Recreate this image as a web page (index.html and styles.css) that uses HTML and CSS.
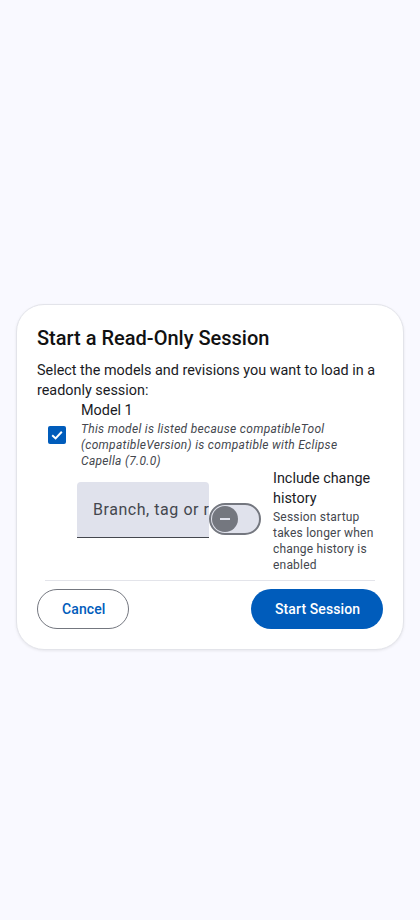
FILE: index.html
```html
<!DOCTYPE html>
<html>
<head>
<meta charset="utf-8">
<link rel="stylesheet" href="styles.css">
</head>
<body>
<div class="page">
  <div class="card">
    <h2 class="title">Start a Read-Only Session</h2>
    <p class="desc">Select the models and revisions you want to load in a readonly session:</p>
    <div class="model">
      <div class="check-wrap">
        <span class="checkbox">
          <svg width="18" height="18" viewBox="0 0 18 18"><path d="M4.2 9.2 L7.6 12.4 L13.8 5.8" fill="none" stroke="#fff" stroke-width="2"/></svg>
        </span>
      </div>
      <div class="model-text">
        <div class="model-name">Model 1</div>
        <div class="model-hint">This model is listed because compatibleTool (compatibleVersion) is compatible with Eclipse Capella (7.0.0)</div>
      </div>
    </div>
    <div class="revision">
      <div class="field-wrap">
        <div class="field"><span class="placeholder">Branch, tag or revision</span></div>
      </div>
      <div class="switch">
        <span class="thumb"><span class="minus"></span></span>
      </div>
      <div class="history">
        <div class="history-label">Include change history</div>
        <div class="history-hint">Session startup takes longer when change history is enabled</div>
      </div>
    </div>
    <div class="divider"></div>
    <div class="actions">
      <button class="btn btn-outline">Cancel</button>
      <button class="btn btn-filled">Start Session</button>
    </div>
  </div>
</div>
</body>
</html>
```
FILE: styles.css
```css
* { box-sizing: border-box; }
html, body { margin: 0; padding: 0; }
body {
  background: #f9f9ff;
  font-family: Roboto, "Liberation Sans", sans-serif;
  color: #1a1b1f;
  width: 420px;
  height: 920px;
}
.page {
  height: 920px;
  display: flex;
  align-items: center;
  padding-left: 16px;
  padding-top: 34px;
}
.card {
  width: 388px;
  background: #fff;
  border: 1px solid #e3e4ea;
  border-radius: 28px;
  box-shadow: 0 1px 3px rgba(0,0,0,0.08);
  padding: 19px 20px 20px 20px;
}
.title {
  margin: 0;
  font-size: 20px;
  line-height: 28px;
  font-weight: 500;
  color: #111;
}
.desc {
  margin: 9px 0 0 0;
  font-size: 14.4px;
  line-height: 20px;
  color: #1a1b1f;
}
.model {
  display: flex;
  align-items: center;
}
.check-wrap {
  width: 40px;
  flex: none;
  display: flex;
  justify-content: center;
}
.checkbox {
  width: 18px;
  height: 18px;
  border-radius: 2px;
  background: #005cbb;
  display: block;
}
.checkbox svg { display: block; }
.model-text { padding-left: 4px; }
.model-name {
  font-size: 14.4px;
  line-height: 20px;
}
.model-hint {
  font-size: 12px;
  line-height: 16px;
  font-style: italic;
  color: #44474e;
  letter-spacing: 0.3px;
  max-width: 290px;
}
.revision {
  display: flex;
  align-items: center;
  padding-left: 40px;
}
.field-wrap {
  width: 132px;
  flex: none;
  padding-bottom: 22px;
}
.field {
  height: 56px;
  background: #e0e2ec;
  border-radius: 4px 4px 0 0;
  border-bottom: 1px solid #44474e;
  overflow: hidden;
  white-space: nowrap;
  padding: 17px 0 0 16px;
  font-size: 16px;
  line-height: 22px;
  color: #44474e;
  letter-spacing: 0.55px;
}
.switch {
  width: 52px;
  height: 32px;
  flex: none;
  border: 2px solid #74777f;
  border-radius: 16px;
  background: #e0e2ec;
  display: flex;
  align-items: center;
  padding-left: 1px;
  margin-bottom: 4px;
}
.thumb {
  width: 26px;
  height: 26px;
  border-radius: 50%;
  background: #74777f;
  display: flex;
  align-items: center;
  justify-content: center;
}
.minus {
  width: 10px;
  height: 2px;
  background: #e0e2ec;
}
.history {
  margin-left: 12px;
  flex: 1;
}
.history-label {
  font-size: 14.4px;
  line-height: 20px;
}
.history-hint {
  font-size: 12px;
  line-height: 16px;
  color: #44474e;
  letter-spacing: 0.2px;
}
.divider {
  height: 1px;
  background: #e3e4ea;
  margin: 7px 8px 8px 8px;
}
.actions {
  display: flex;
  justify-content: space-between;
}
.btn {
  height: 40px;
  border-radius: 20px;
  font-family: Roboto, "Liberation Sans", sans-serif;
  font-size: 14px;
  font-weight: 500;
  padding: 0 24px;
  letter-spacing: 0.1px;
  white-space: nowrap;
}
.btn-outline {
  background: #fff;
  border: 1px solid #74777f;
  color: #005cbb;
  width: 92px;
}
.btn-filled {
  background: #005cbb;
  border: none;
  color: #fff;
  width: 132px;
}
```
